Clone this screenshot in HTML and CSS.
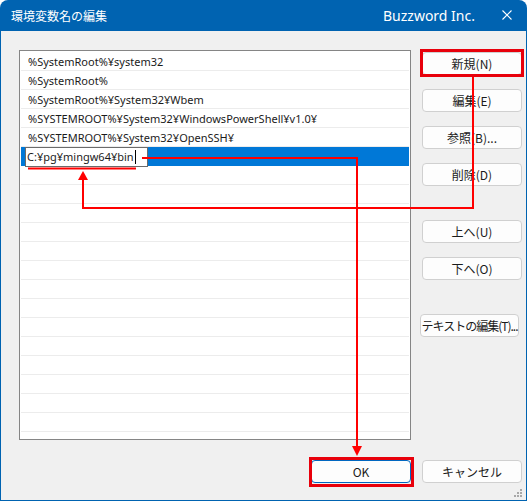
FILE: index.html
```html
<!DOCTYPE html>
<html lang="ja">
<head>
<meta charset="utf-8">
<title>環境変数名の編集</title>
<link rel="stylesheet" href="styles.css">
</head>
<body>
<div class="window">
  <div class="titlebar">
    <span class="title">環境変数名の編集</span>
    <span class="brand">Buzzword Inc.</span>
    <svg class="close" width="10" height="10" viewBox="0 0 10 10"><path d="M0.5 0.5L9.5 9.5M9.5 0.5L0.5 9.5" stroke="#fff" stroke-width="1.1" fill="none"/></svg>
  </div>
  <div class="body">
    <div class="main">
      <div class="list">
        <div class="row">%SystemRoot%¥system32</div>
        <div class="row">%SystemRoot%</div>
        <div class="row">%SystemRoot%¥System32¥Wbem</div>
        <div class="row">%SYSTEMROOT%¥System32¥WindowsPowerShell¥v1.0¥</div>
        <div class="row">%SYSTEMROOT%¥System32¥OpenSSH¥</div>
        <div class="row selected"><div class="editor">C:¥pg¥mingw64¥bin<span class="caret"></span></div></div>
        <div class="row"></div>
        <div class="row"></div>
        <div class="row"></div>
        <div class="row"></div>
        <div class="row"></div>
        <div class="row"></div>
        <div class="row"></div>
        <div class="row"></div>
        <div class="row"></div>
        <div class="row"></div>
        <div class="row"></div>
        <div class="row"></div>
        <div class="row"></div>
        <div class="row"></div>
        <div class="row"></div>
      </div>
      <div class="side">
        <button class="btn">新規(N)</button>
        <button class="btn">編集(E)</button>
        <button class="btn">参照(B)...</button>
        <button class="btn">削除(D)</button>
        <button class="btn spaced">上へ(U)</button>
        <button class="btn">下へ(O)</button>
        <button class="btn spaced wide">テキストの編集(T)...</button>
      </div>
    </div>
    <div class="footer">
      <button class="btn default">OK</button>
      <button class="btn">キャンセル</button>
    </div>
    <svg class="grip" width="11" height="11" viewBox="0 0 11 11">
      <rect x="6" y="0" width="2" height="2" fill="#a8a8a8"/>
      <rect x="3" y="3" width="2" height="2" fill="#a8a8a8"/>
      <rect x="6" y="3" width="2" height="2" fill="#a8a8a8"/>
      <rect x="0" y="6" width="2" height="2" fill="#a8a8a8"/>
      <rect x="3" y="6" width="2" height="2" fill="#a8a8a8"/>
      <rect x="6" y="6" width="2" height="2" fill="#a8a8a8"/>
    </svg>
  </div>
  <svg class="annot" width="527" height="501" viewBox="0 0 527 501">
    <rect x="421.5" y="50.5" width="101" height="25" fill="none" stroke="#e8000b" stroke-width="3"/>
    <rect x="310.5" y="458.5" width="102" height="27" fill="none" stroke="#e8000b" stroke-width="3"/>
    <polyline points="473,77 473,208 83,208 83,178" fill="none" stroke="#ff0000" stroke-width="2"/>
    <polygon points="83,171 78,180 88,180" fill="#ff0000"/>
    <line x1="28" y1="168.5" x2="136" y2="168.5" stroke="#ff0000" stroke-width="2"/>
    <polyline points="142,158 357,158 357,448" fill="none" stroke="#ff0000" stroke-width="2"/>
    <polygon points="352,446 362,446 357,456" fill="#ff0000"/>
  </svg>
</div>
</body>
</html>
```

FILE: styles.css
```css
html, body {
  margin: 0;
  padding: 0;
  background: #ffffff;
}

body {
  font-family: "Noto Sans", "Noto Sans CJK JP", sans-serif;
  font-size: 12px;
  color: #1b1b1b;
}

.window {
  position: relative;
  width: 527px;
  height: 501px;
  box-sizing: border-box;
  padding: 0 1px 1px 1px;
  background: #0063b1;
  border-radius: 8px 8px 0 0;
  display: flex;
  flex-direction: column;
  overflow: hidden;
}

.titlebar {
  height: 31px;
  flex: none;
  display: flex;
  align-items: center;
  padding: 0 14px 0 10px;
  color: #ffffff;
}

.title {
  font-family: "Noto Sans CJK JP", sans-serif;
  font-size: 12px;
  flex: 1;
  margin-top: -1px;
}

.brand {
  font-family: "Noto Sans", sans-serif;
  font-size: 14px;
  margin-right: 27px;
  margin-top: -1px;
}

.close {
  display: block;
  margin-top: -1px;
}

.body {
  position: relative;
  flex: 1;
  background: #f0f0f0;
  padding: 19px 4px 17px 18px;
  display: flex;
  flex-direction: column;
  gap: 20px;
}

.main {
  display: flex;
  align-items: flex-start;
}

.list {
  width: 392px;
  height: 390px;
  box-sizing: border-box;
  border: 1px solid #858585;
  background: #ffffff;
  padding: 1px 1px 0 1px;
  overflow: hidden;
  flex: none;
}

.row {
  position: relative;
  height: 19px;
  box-sizing: border-box;
  border-bottom: 1px solid #ececec;
  padding-left: 7px;
  padding-top: 1px;
  line-height: 17px;
  white-space: nowrap;
  font-family: "Noto Sans", "Noto Sans CJK JP", sans-serif;
  font-size: 11px;
  color: #1b1b1b;
}

.row.selected {
  background: #0078d7;
  border-bottom-color: #0078d7;
}

.editor {
  position: absolute;
  left: 4px;
  top: 0;
  width: 123px;
  height: 20px;
  box-sizing: border-box;
  border: 1px solid #6b6b6b;
  background: #ffffff;
  padding-left: 1px;
  line-height: 18px;
  color: #1b1b1b;
}

.caret {
  display: inline-block;
  width: 1px;
  height: 14px;
  background: #000;
  margin-left: 1px;
  vertical-align: -3px;
}

.side {
  display: flex;
  flex-direction: column;
  gap: 14px;
  width: 100px;
  margin-left: 11px;
  padding-top: 2px;
  flex: none;
}

.btn {
  height: 23px;
  width: 100px;
  box-sizing: border-box;
  border: 1px solid #d0d0d0;
  border-radius: 4px;
  background: #fdfdfd;
  font-family: "Noto Sans CJK JP", sans-serif;
  font-size: 12px;
  color: #1b1b1b;
  padding: 0;
  line-height: 20px;
  text-align: center;
  white-space: nowrap;
}

.btn.spaced {
  margin-top: 20px;
}

.btn.wide {
  width: 99px;
  margin-left: -2px;
  letter-spacing: -1px;
}

.footer {
  display: flex;
  justify-content: flex-end;
  gap: 11px;
}

.btn.default {
  border-color: #0067c0;
}

.grip {
  position: absolute;
  right: 1px;
  bottom: 0px;
}

.annot {
  position: absolute;
  left: 0;
  top: 0;
  pointer-events: none;
}
```
